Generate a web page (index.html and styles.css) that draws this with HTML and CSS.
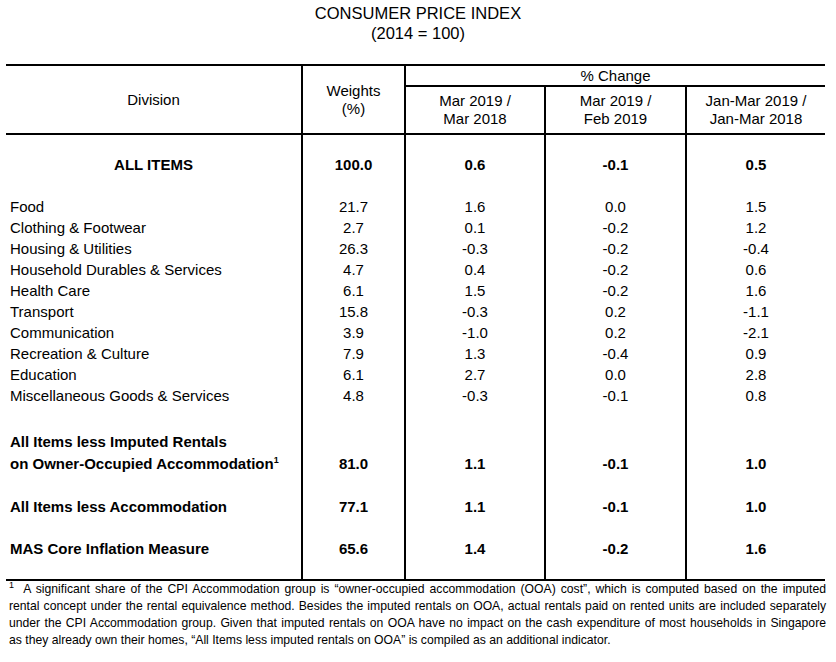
FILE: index.html
```html
<!DOCTYPE html>
<html lang="en">
<head>
<meta charset="utf-8">
<title>Consumer Price Index</title>
<link rel="stylesheet" href="styles.css">
</head>
<body>
<div class="page">
  <h1 class="title"><span>CONSUMER PRICE INDEX</span><span>(2014 = 100)</span></h1>
  <table class="cpi">
    <colgroup>
      <col class="col-div"><col class="col-wt"><col class="col-a"><col class="col-b"><col class="col-c">
    </colgroup>
    <thead>
      <tr class="h1">
        <th rowspan="2" class="hb">Division</th>
        <th rowspan="2" class="hb">Weights<br>(%)</th>
        <th colspan="3" class="pc">% Change</th>
      </tr>
      <tr class="h2">
        <th class="hb">Mar 2019 /<br>Mar 2018</th>
        <th class="hb">Mar 2019 /<br>Feb 2019</th>
        <th class="hb">Jan-Mar 2019 /<br>Jan-Mar 2018</th>
      </tr>
    </thead>
    <tbody>
      <tr class="gap g19"><td></td><td></td><td></td><td></td><td></td></tr>
      <tr class="row r20 strong"><td class="center">ALL ITEMS</td><td>100.0</td><td>0.6</td><td>-0.1</td><td>0.5</td></tr>
      <tr class="gap g22"><td></td><td></td><td></td><td></td><td></td></tr>
      <tr class="row"><td class="name">Food</td><td>21.7</td><td>1.6</td><td>0.0</td><td>1.5</td></tr>
      <tr class="row"><td class="name">Clothing &amp; Footwear</td><td>2.7</td><td>0.1</td><td>-0.2</td><td>1.2</td></tr>
      <tr class="row"><td class="name">Housing &amp; Utilities</td><td>26.3</td><td>-0.3</td><td>-0.2</td><td>-0.4</td></tr>
      <tr class="row"><td class="name">Household Durables &amp; Services</td><td>4.7</td><td>0.4</td><td>-0.2</td><td>0.6</td></tr>
      <tr class="row"><td class="name">Health Care</td><td>6.1</td><td>1.5</td><td>-0.2</td><td>1.6</td></tr>
      <tr class="row"><td class="name">Transport</td><td>15.8</td><td>-0.3</td><td>0.2</td><td>-1.1</td></tr>
      <tr class="row"><td class="name">Communication</td><td>3.9</td><td>-1.0</td><td>0.2</td><td>-2.1</td></tr>
      <tr class="row"><td class="name">Recreation &amp; Culture</td><td>7.9</td><td>1.3</td><td>-0.4</td><td>0.9</td></tr>
      <tr class="row"><td class="name">Education</td><td>6.1</td><td>2.7</td><td>0.0</td><td>2.8</td></tr>
      <tr class="row"><td class="name">Miscellaneous Goods &amp; Services</td><td>4.8</td><td>-0.3</td><td>-0.1</td><td>0.8</td></tr>
      <tr class="gap g24"><td></td><td></td><td></td><td></td><td></td></tr>
      <tr class="row r22 strong"><td class="name">All Items less Imputed Rentals</td><td></td><td></td><td></td><td></td></tr>
      <tr class="row r22 strong"><td class="name">on Owner-Occupied Accommodation<sup class="ref">1</sup></td><td>81.0</td><td>1.1</td><td>-0.1</td><td>1.0</td></tr>
      <tr class="gap g21"><td></td><td></td><td></td><td></td><td></td></tr>
      <tr class="row r22 strong"><td class="name">All Items less Accommodation</td><td>77.1</td><td>1.1</td><td>-0.1</td><td>1.0</td></tr>
      <tr class="gap g20"><td></td><td></td><td></td><td></td><td></td></tr>
      <tr class="row r22 strong"><td class="name">MAS Core Inflation Measure</td><td>65.6</td><td>1.4</td><td>-0.2</td><td>1.6</td></tr>
      <tr class="gap g22 last"><td></td><td></td><td></td><td></td><td></td></tr>
    </tbody>
  </table>
  <div class="foot">
    <span class="line"><sup class="fn">1</sup>&nbsp; A significant share of the CPI Accommodation group is “owner-occupied accommodation (OOA) cost”, which is computed based on the imputed</span>
    <span class="line">rental concept under the rental equivalence method. Besides the imputed rentals on OOA, actual rentals paid on rented units are included separately</span>
    <span class="line">under the CPI Accommodation group. Given that imputed rentals on OOA have no impact on the cash expenditure of most households in Singapore</span>
    <span class="line end">as they already own their homes, “All Items less imputed rentals on OOA” is compiled as an additional indicator.</span>
  </div>
</div>
</body>
</html>
```

FILE: styles.css
```css
* { box-sizing: border-box; }

body {
  margin: 0;
  background: #fff;
  color: #000;
  font-family: "Liberation Sans", Arial, sans-serif;
}

.page { width: 836px; }

.title {
  margin: 0;
  padding-top: 3px;
  font-size: 16.5px;
  font-weight: normal;
  line-height: 20px;
  text-align: center;
}
.title span { display: block; }

.cpi {
  margin: 21px 0 0 6px;
  width: 819px;
  table-layout: fixed;
  border-collapse: separate;
  border-spacing: 0;
  font-size: 15px;
}

.col-div { width: 295px; }
.col-wt { width: 103px; }
.col-a { width: 140px; }
.col-b { width: 141px; }
.col-c { width: 140px; }

.cpi th, .cpi td {
  padding: 0;
  font-weight: normal;
  text-align: center;
  vertical-align: middle;
  white-space: nowrap;
}

.cpi th + th, .cpi td + td { border-left: 2px solid #000; }
.cpi .h2 th { border-left: 2px solid #000; }

.cpi .h1 { height: 23px; }
.cpi .h1 th { border-top: 2px solid #000; line-height: 18px; }
.cpi .h2 { height: 48px; }
.cpi .h2 th { line-height: 18px; }
.cpi .pc { border-bottom: 2px solid #000; }
.cpi .hb { border-bottom: 2px solid #000; }

.cpi .row { height: 21px; }
.cpi .r20 { height: 20px; }
.cpi .r22 { height: 22px; }
.cpi .g19 { height: 19px; }
.cpi .g20 { height: 20px; }
.cpi .g21 { height: 21px; }
.cpi .g22 { height: 22px; }
.cpi .g24 { height: 24px; }
.cpi .last td { border-bottom: 2px solid #000; }

.cpi .strong td { font-weight: bold; }
.cpi td.name { text-align: left; padding-left: 4px; }

.ref {
  font-size: 9px;
  vertical-align: 6px;
  line-height: 0;
}

.foot {
  margin-left: 9px;
  width: 817px;
  font-family: "Liberation Sans", Arial, sans-serif;
  font-size: 12.2px;
  line-height: 17px;
}
.foot .line {
  display: block;
  text-align: justify;
  text-align-last: justify;
}
.foot .end { text-align-last: left; }
.fn {
  font-size: 9px;
  vertical-align: 5px;
  line-height: 0;
}
```
